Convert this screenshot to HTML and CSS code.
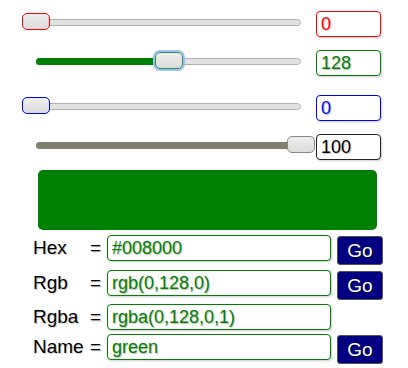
FILE: index.html
```
<!DOCTYPE html>
<html>
<head>
<meta charset="UTF-8">
<title>Color picker</title>
<link rel="stylesheet" href="styles.css">
</head>
<body>
<div class="panel">
    <div class="slider-row red">
        <div class="slider"><div class="track"></div><div class="thumb" style="left:0px"></div></div>
        <input class="num" type="text" value="0">
    </div>
    <div class="slider-row green">
        <div class="slider"><div class="track"></div><div class="fill" style="width:147px"></div><div class="thumb focus" style="left:133px"></div></div>
        <input class="num" type="text" value="128">
    </div>
    <div class="slider-row blue">
        <div class="slider"><div class="track"></div><div class="thumb" style="left:0px"></div></div>
        <input class="num" type="text" value="0">
    </div>
    <div class="slider-row alpha">
        <div class="slider"><div class="track"></div><div class="fill" style="width:279px"></div><div class="thumb" style="left:265px"></div></div>
        <input class="num" type="text" value="100">
    </div>

    <div class="swatch" style="background:#008000"></div>

    <div class="field">
        <span class="label">Hex</span><span class="eq">=</span>
        <input class="code" type="text" value="#008000">
        <button class="go">Go</button>
    </div>
    <div class="field tight">
        <span class="label">Rgb</span><span class="eq">=</span>
        <input class="code" type="text" value="rgb(0,128,0)">
        <button class="go">Go</button>
    </div>
    <div class="field short">
        <span class="label">Rgba</span><span class="eq">=</span>
        <input class="code" type="text" value="rgba(0,128,0,1)">
    </div>
    <div class="field">
        <span class="label">Name</span><span class="eq">=</span>
        <input class="code" type="text" value="green">
        <button class="go">Go</button>
    </div>
</div>
</body>
</html>
```

FILE: styles.css
```
body {
    margin: 0;
    background: #fff;
    font-family: "Liberation Sans", Arial, sans-serif;
}
.panel {
    padding-top: 11px;
}

/* sliders */
.slider-row {
    display: flex;
    align-items: flex-start;
    padding-left: 22px;
    height: 27px;
    margin-bottom: 12px;
}
.slider-row.green {
    margin-bottom: 18px;
}
.slider-row.alpha {
    margin-bottom: 9px;
}
.slider {
    position: relative;
    width: 293px;
    height: 27px;
}
.track {
    position: absolute;
    left: 14px;
    top: 8px;
    width: 263px;
    height: 5px;
    background: #e2e2e2;
    border: 1px solid #b0b0b0;
    border-radius: 4px;
}
.fill {
    position: absolute;
    left: 14px;
    top: 8px;
    height: 7px;
    border-radius: 4px;
}
.green .fill {
    background: #008000;
}
.alpha .fill {
    background: #80806c;
}
.thumb {
    position: absolute;
    top: 2px;
    width: 26px;
    height: 15px;
    border: 1px solid #999;
    border-radius: 5px;
    background: linear-gradient(#eeeeee, #dcdcdc);
}
.red .thumb { border-color: #ff0000; }
.green .thumb { border-color: #2e8b57; }
.blue .thumb { border-color: #0000ff; }
.alpha .thumb { border-color: #8a8a80; }
.thumb.focus {
    box-shadow: 0 0 0 2px #9cc3f5;
}
.num {
    width: 65px;
    height: 26px;
    box-sizing: border-box;
    margin-left: 1px;
    padding: 0 4px;
    border: 1px solid #333;
    border-radius: 4px;
    background: #fff;
    font-family: "Liberation Sans", Arial, sans-serif;
    font-size: 18px;
    box-shadow: 1px 1px 2px rgba(0, 0, 0, 0.2);
    text-shadow: 1px 1px 1px rgba(0, 0, 0, 0.25);
}
.red .num { border-color: #ff0000; color: #ff0000; }
.green .num { border-color: #008000; color: #008000; }
.blue .num { border-color: #0000ff; color: #0000ff; }
.alpha .num { border-color: #222; color: #000; }

.swatch {
    margin-left: 38px;
    width: 339px;
    height: 60px;
    border-radius: 5px;
    margin-bottom: 5px;
}

/* text fields */
.field {
    display: flex;
    align-items: flex-start;
    padding-left: 33px;
    height: 30px;
    margin-bottom: 5px;
    font-size: 19px;
}
.field.tight {
    margin-bottom: 4px;
}
.field.short {
    height: 26px;
    margin-bottom: 4px;
}
.label {
    width: 57px;
    line-height: 26px;
    color: #000;
    text-shadow: 1px 1px 1px rgba(0, 0, 0, 0.2);
}
.eq {
    width: 17px;
    line-height: 26px;
    text-shadow: 1px 1px 1px rgba(0, 0, 0, 0.2);
}
.code {
    width: 224px;
    height: 26px;
    box-sizing: border-box;
    padding: 0 4px;
    border: 1px solid #008000;
    border-radius: 4px;
    color: #008000;
    font-family: "Liberation Sans", Arial, sans-serif;
    font-size: 18px;
    box-shadow: 1px 1px 2px rgba(0, 0, 0, 0.2);
    text-shadow: 1px 1px 1px rgba(0, 0, 0, 0.25);
}
.go {
    margin: 1px 0 0 6px;
    width: 46px;
    height: 29px;
    padding: 0;
    background: #000080;
    color: #fff;
    border: 1px solid #555;
    border-radius: 3px;
    font-family: "Liberation Sans", Arial, sans-serif;
    font-size: 19px;
    text-shadow: 1px 1px 1px rgba(0, 0, 0, 0.6);
}
```
